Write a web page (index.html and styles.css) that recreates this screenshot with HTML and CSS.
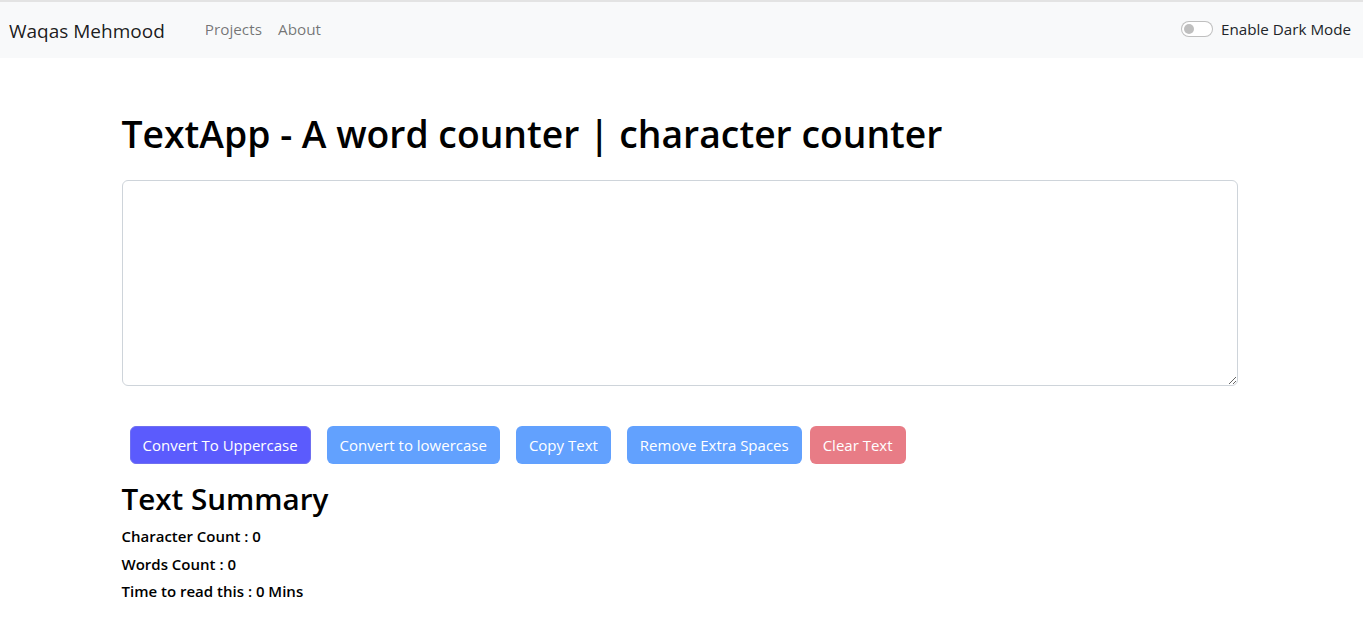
FILE: index.html
```html
<!DOCTYPE html>
<html lang="en">
<head>
<meta charset="utf-8">
<title>TextApp</title>
<link rel="stylesheet" href="styles.css">
</head>
<body>
<div class="topline"></div>
<nav class="navbar">
  <a class="brand" href="#">Waqas Mehmood</a>
  <ul class="nav">
    <li><a class="nav-link" href="#">Projects</a></li>
    <li><a class="nav-link" href="#">About</a></li>
  </ul>
  <label class="switch">
    <span class="switch-track"><span class="switch-knob"></span></span>
    <span class="switch-label">Enable Dark Mode</span>
  </label>
</nav>
<main class="container">
  <h1 class="title">TextApp - A word counter | character counter</h1>
  <div class="field">
    <textarea class="textarea" rows="8"></textarea>
  </div>
  <div class="actions">
    <button class="btn btn-main spaced">Convert To Uppercase</button>
    <button class="btn btn-light spaced">Convert to lowercase</button>
    <button class="btn btn-light spaced">Copy Text</button>
    <button class="btn btn-light spaced">Remove Extra Spaces</button>
    <button class="btn btn-danger">Clear Text</button>
  </div>
</main>
<section class="container summary">
  <h2 class="summary-title">Text Summary</h2>
  <p class="stat">Character Count : 0</p>
  <p class="stat">Words Count : 0</p>
  <p class="stat">Time to read this : 0 Mins</p>
</section>
</body>
</html>
```
FILE: styles.css
```css
* { box-sizing: border-box; }
html, body { margin: 0; padding: 0; }
body {
  font-family: "Open Sans", "Noto Sans", sans-serif;
  font-size: 15px;
  line-height: 24px;
  color: #212529;
  background: #fff;
}
.topline { height: 2px; background: #e3e3e3; }
.navbar {
  display: flex;
  align-items: center;
  height: 56px;
  padding: 0 12px 0 9px;
  background: #f8f9fa;
}
.brand {
  font-size: 19px;
  line-height: 30px;
  padding-top: 2px;
  color: rgba(0,0,0,.9);
  text-decoration: none;
  margin-right: 32px;
}
.nav {
  display: flex;
  list-style: none;
  margin: 0;
  padding: 0;
  flex: 1;
}
.nav-link {
  display: block;
  padding: 7px 8px 9px;
  font-size: 15.3px;
  color: rgba(0,0,0,.55);
  text-decoration: none;
}
.switch { display: flex; align-items: center; gap: 8px; padding-bottom: 2px; }
.switch-track {
  width: 32px; height: 16px;
  border: 1px solid rgba(0,0,0,.25);
  border-radius: 8px;
  background: #fff;
  display: flex; align-items: center;
  padding-left: 2px;
}
.switch-knob { width: 10px; height: 10px; border-radius: 50%; background: #bfbfbf; }
.switch-label { color: #212529; font-size: 15.2px; }

.container { max-width: 1140px; margin: 0 auto; padding: 0 14px 0 10px; }
.title {
  font-size: 37.3px;
  font-weight: 600;
  line-height: 48px;
  margin: 52px 0 22px;
  color: #000;
}
.textarea {
  display: block;
  width: 100%;
  height: 206px;
  border: 1px solid #ced4da;
  border-radius: 6px;
  padding: 6px 12px;
  font: inherit;
  resize: vertical;
}
.actions { display: flex; margin-top: 40px; }
.btn {
  font: inherit;
  color: #fff;
  border: 1px solid transparent;
  border-radius: 6px;
  padding: 6px 12px;
  height: 38px;
  line-height: 24px;
}
.spaced { margin: 0 8px; }
.btn-main { background: #5b5bfd; border-color: #6f6ff0; }
.btn-light { background: #62a1fe; }
.btn-danger { background: #e87c86; }
.summary { margin-top: 16px; }
.summary-title {
  font-size: 29.6px;
  font-weight: 600;
  line-height: 38px;
  margin: 0 0 5px;
  color: #000;
}
.stat {
  margin: 0;
  font-weight: 600;
  line-height: 27.5px;
  color: #000;
}
```
